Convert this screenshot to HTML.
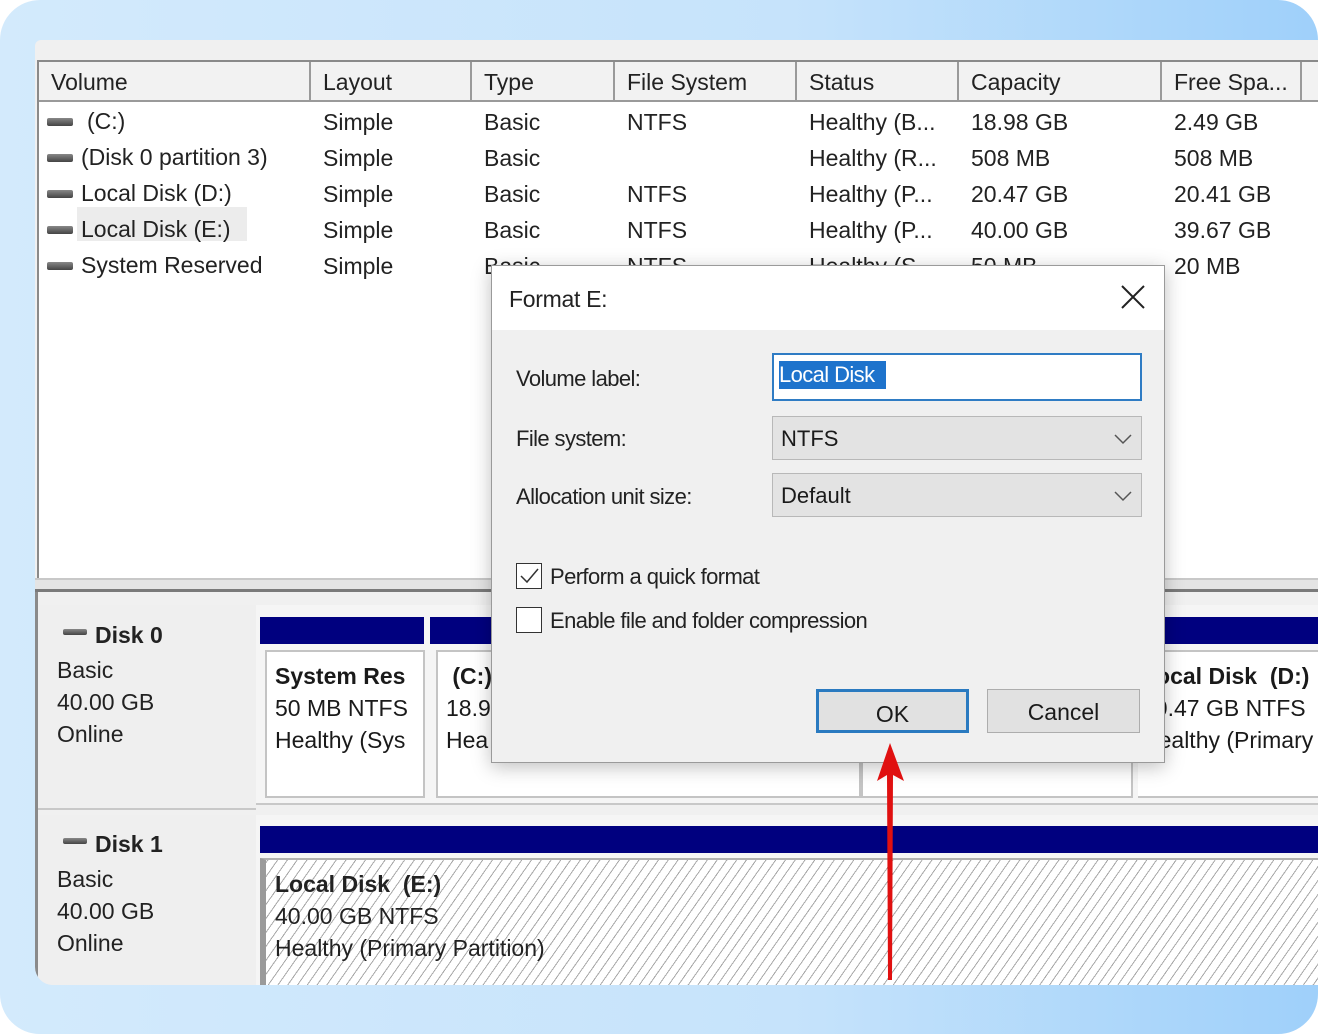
<!DOCTYPE html>
<html><head><style>
*{margin:0;padding:0;box-sizing:border-box}
body{width:1318px;height:1034px;overflow:hidden;background:#fff;font-family:"Liberation Sans",sans-serif;color:#1a1a1a;position:relative}
.bg{position:absolute;inset:0;background:linear-gradient(90deg,#d3eafc 0%,#c6e3fb 60%,#9fd0fa 100%);border-radius:40px 40px 40px 40px}
.panel{position:absolute;left:35px;top:40px;width:1283px;height:945px;background:#f0f0f0;border-radius:6px 0 0 18px;overflow:hidden}
.abs{position:absolute}
.list{position:absolute;left:2px;top:20px;width:1290px;height:520px;background:#fff;border:2px solid #8a8a8a;border-bottom:none}
.hdr{position:absolute;top:0;height:40px;background:#f2f2f2;border-bottom:2px solid #9a9a9a;border-right:2px solid #9a9a9a;font-size:23px;padding:7px 0 0 12px;color:#222}
.cell{position:absolute;font-size:23px;color:#222;white-space:nowrap}
.ic{position:absolute;width:26px;height:8px;background:linear-gradient(#888,#444);border-radius:2px}
.navy{position:absolute;background:#00007f}
.part{position:absolute;background:#fff;border:2px solid #c4c4c4;font-size:23px;padding:8px 0 0 8px;line-height:32px}
.dlg{position:absolute;left:491px;top:265px;width:674px;height:498px;background:#f0f0f0;border:1px solid #9a9a9a;box-shadow:0 4px 18px rgba(0,0,0,.25)}
.dl{position:absolute;font-size:22px;color:#222;letter-spacing:-0.6px}
.sel{position:absolute;left:280px;width:370px;height:44px;background:#e3e3e3;border:1px solid #b8b8b8;font-size:22px;padding:9px 0 0 8px}
.btn{position:absolute;top:423px;width:153px;height:44px;background:#e1e1e1;border:1px solid #adadad;font-size:23px;text-align:center;padding-top:9px}
.cb{position:absolute;left:24px;width:26px;height:26px;border:1.5px solid #333;background:#fff}
</style></head><body>
<div class="bg"></div>
<div class="panel">
 <div class="list">
  <div class="hdr" style="left:0;width:272px">Volume</div>
  <div class="hdr" style="left:272px;width:161px">Layout</div>
  <div class="hdr" style="left:433px;width:143px">Type</div>
  <div class="hdr" style="left:576px;width:182px">File System</div>
  <div class="hdr" style="left:758px;width:162px">Status</div>
  <div class="hdr" style="left:920px;width:203px">Capacity</div>
  <div class="hdr" style="left:1123px;width:140px">Free Spa...</div>
  <div class="hdr" style="left:1263px;width:40px"></div>
  <div class="abs" style="left:38px;top:145px;width:170px;height:34px;background:#ececec"></div>
 </div>
 <div class="ic" style="left:12px;top:78px"></div><div class="cell" style="left:52px;top:68px">(C:)</div>
 <div class="ic" style="left:12px;top:114px"></div><div class="cell" style="left:46px;top:104px">(Disk 0 partition 3)</div>
 <div class="ic" style="left:12px;top:150px"></div><div class="cell" style="left:46px;top:140px">Local Disk (D:)</div>
 <div class="ic" style="left:12px;top:186px"></div><div class="cell" style="left:46px;top:176px">Local Disk (E:)</div>
 <div class="ic" style="left:12px;top:222px"></div><div class="cell" style="left:46px;top:212px">System Reserved</div>
 <div class="cell" style="left:288px;top:64px;line-height:36px">Simple<br>Simple<br>Simple<br>Simple<br>Simple</div>
 <div class="cell" style="left:449px;top:64px;line-height:36px">Basic<br>Basic<br>Basic<br>Basic<br>Basic</div>
 <div class="cell" style="left:592px;top:64px;line-height:36px">NTFS<br>&nbsp;<br>NTFS<br>NTFS<br>NTFS</div>
 <div class="cell" style="left:774px;top:64px;line-height:36px">Healthy (B...<br>Healthy (R...<br>Healthy (P...<br>Healthy (P...<br>Healthy (S...</div>
 <div class="cell" style="left:936px;top:64px;line-height:36px">18.98 GB<br>508 MB<br>20.47 GB<br>40.00 GB<br>50 MB</div>
 <div class="cell" style="left:1139px;top:64px;line-height:36px">2.49 GB<br>508 MB<br>20.41 GB<br>39.67 GB<br>20 MB</div>
 <div class="abs" style="left:0;top:538px;width:1283px;height:14px;background:#e4e4e4;border-top:2px solid #c8c8c8;border-bottom:3px solid #7a7a7a"></div>
 <div class="abs" style="left:0;top:552px;width:3px;height:400px;background:#8a8a8a"></div>
 <div class="abs" style="left:3px;top:565px;width:218px;height:205px;background:#efefef;border-bottom:2px solid #c8c8c8"></div>
 <div class="ic" style="left:28px;top:589px;width:24px;height:6px"></div>
 <div class="cell" style="left:60px;top:582px;font-weight:bold">Disk 0</div>
 <div class="cell" style="left:22px;top:614px;line-height:32px">Basic<br>40.00 GB<br>Online</div>
 <div class="abs" style="left:221px;top:565px;width:1070px;height:200px;background:#f5f5f5;border-bottom:2px solid #c8c8c8"></div>
 <div class="navy" style="left:225px;top:577px;width:164px;height:27px"></div>
 <div class="navy" style="left:395px;top:577px;width:900px;height:27px"></div>
 <div class="part" style="left:230px;top:610px;width:160px;height:148px"><b>System Res</b><br>50 MB NTFS<br>Healthy (Sys</div>
 <div class="part" style="left:401px;top:610px;width:425px;height:148px">&nbsp;<b>(C:)</b><br>18.98<br>Hea</div>
 <div class="part" style="left:826px;top:610px;width:272px;height:148px"></div>
 <div class="part" style="left:1103px;top:610px;width:200px;height:148px;padding-left:4px;border-left:none"><b>Local Disk &nbsp;(D:)</b><br>20.47 GB NTFS<br>Healthy (Primary</div>
 <div class="abs" style="left:3px;top:775px;width:218px;height:175px;background:#efefef"></div>
 <div class="ic" style="left:28px;top:798px;width:24px;height:6px"></div>
 <div class="cell" style="left:60px;top:791px;font-weight:bold">Disk 1</div>
 <div class="cell" style="left:22px;top:823px;line-height:32px">Basic<br>40.00 GB<br>Online</div>
 <div class="abs" style="left:221px;top:775px;width:1070px;height:175px;background:#f5f5f5"></div>
 <div class="navy" style="left:225px;top:786px;width:1070px;height:27px"></div>
 <div class="abs" style="left:225px;top:818px;width:1070px;height:130px;border-left:6px solid #9a9a9a;border-top:2px solid #b0b0b0;background:repeating-linear-gradient(-55deg,#fff 0 7px,#a8a8a8 7px 8px)"></div>
 <div class="cell" style="left:240px;top:828px;line-height:32px"><b>Local Disk &nbsp;(E:)</b><br>40.00 GB NTFS<br>Healthy (Primary Partition)</div>
</div>
<div class="dlg">
 <div class="abs" style="left:0;top:0;width:672px;height:64px;background:#fff"></div>
 <div class="dl" style="left:17px;top:20px;font-size:23px;letter-spacing:-0.3px">Format E:</div>
 <svg class="abs" style="left:628px;top:18px" width="26" height="26"><path d="M2 2L24 24M24 2L2 24" stroke="#222" stroke-width="2"/></svg>
 <div class="dl" style="left:24px;top:100px">Volume label:</div>
 <div class="abs" style="left:280px;top:87px;width:370px;height:48px;background:#fff;border:2px solid #2f7cc4"></div>
 <div class="abs" style="left:287px;top:95px;width:107px;height:28px;background:#1e73cc"></div>
 <div class="dl" style="left:287px;top:96px;color:#fff">Local Disk</div>
 <div class="dl" style="left:24px;top:160px">File system:</div>
 <div class="sel" style="top:150px">NTFS</div>
 <svg class="abs" style="left:622px;top:167px" width="18" height="12"><path d="M1 2L9 10L17 2" stroke="#555" stroke-width="1.5" fill="none"/></svg>
 <div class="dl" style="left:24px;top:218px">Allocation unit size:</div>
 <div class="sel" style="top:207px">Default</div>
 <svg class="abs" style="left:622px;top:224px" width="18" height="12"><path d="M1 2L9 10L17 2" stroke="#555" stroke-width="1.5" fill="none"/></svg>
 <div class="cb" style="top:297px"><svg width="24" height="24" style="position:absolute;left:0;top:0"><path d="M4 12L10 18L21 5" stroke="#333" stroke-width="1.5" fill="none"/></svg></div>
 <div class="dl" style="left:58px;top:298px">Perform a quick format</div>
 <div class="cb" style="top:341px"></div>
 <div class="dl" style="left:58px;top:342px">Enable file and folder compression</div>
 <div class="btn" style="left:324px;border:3px solid #2a7ac0">OK</div>
 <div class="btn" style="left:495px">Cancel</div>
</div>
<svg class="abs" style="left:860px;top:735px" width="60" height="250"><path d="M28 245L27 40L17 46L30 8L44 46L33 40L32 245Z" fill="#e01010"/></svg>
</body></html>
